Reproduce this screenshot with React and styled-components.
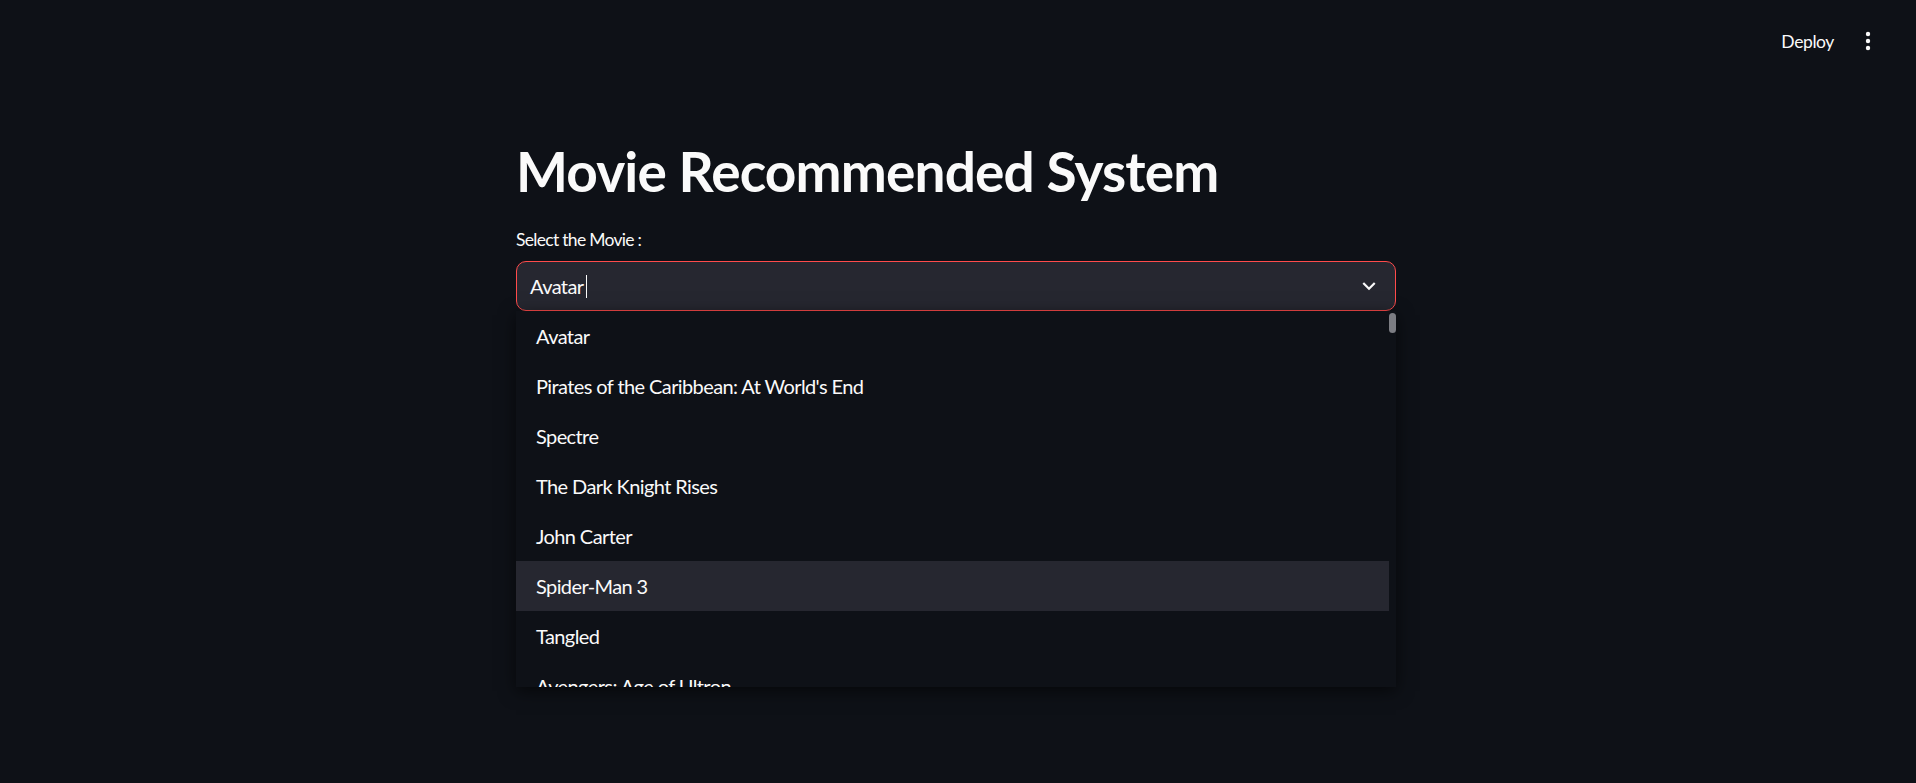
import React from 'react'
import styled, { createGlobalStyle } from 'styled-components'

const GlobalStyle = createGlobalStyle`
  html, body {
    margin: 0;
    padding: 0;
    background: #0e1117;
    color: #fafafa;
    font-family: Lato, "Noto Sans", sans-serif;
  }
  body {
    height: 783px;
    overflow: hidden;
  }
`

const movies = [
  'Avatar',
  "Pirates of the Caribbean: At World's End",
  'Spectre',
  'The Dark Knight Rises',
  'John Carter',
  'Spider-Man 3',
  'Tangled',
  'Avengers: Age of Ultron',
]

export default function App() {
  return (
    <>
      <GlobalStyle />
      <Page>
        <Header>
          <DeployButton>Deploy</DeployButton>
          <MenuButton aria-label="Main menu">
            <svg width="6" height="20" viewBox="0 0 6 20">
              <circle cx="3" cy="3" r="2.2" fill="#fafafa" />
              <circle cx="3" cy="10" r="2.2" fill="#fafafa" />
              <circle cx="3" cy="17" r="2.2" fill="#fafafa" />
            </svg>
          </MenuButton>
        </Header>
        <Main>
          <Title>Movie Recommended System</Title>
          <Label>Select the Movie :</Label>
          <SelectWrap>
            <SelectBox>
              <SelectValue>
                Avatar<Caret />
              </SelectValue>
              <svg width="26" height="26" viewBox="0 0 24 24">
                <path
                  d="M16.59 8.59L12 13.17 7.41 8.59 6 10l6 6 6-6z"
                  fill="#fafafa"
                />
              </svg>
            </SelectBox>
            <Menu>
              <Options>
                {movies.map((m, i) => (
                  <Option key={m} active={i === 5}>
                    {m}
                  </Option>
                ))}
              </Options>
              <Track>
                <Thumb />
              </Track>
            </Menu>
          </SelectWrap>
        </Main>
      </Page>
    </>
  )
}

const Page = styled.div`
  min-height: 783px;
  background: #0e1117;
`

const Header = styled.header`
  display: flex;
  justify-content: flex-end;
  align-items: center;
  height: 82px;
  padding-right: 28px;
  gap: 2px;
`

const DeployButton = styled.button`
  background: transparent;
  border: none;
  color: #fafafa;
  font-family: inherit;
  font-size: 17.5px;
  letter-spacing: -0.4px;
  padding: 6px 12px;
  cursor: pointer;
`

const MenuButton = styled.button`
  display: flex;
  align-items: center;
  justify-content: center;
  width: 40px;
  height: 40px;
  background: transparent;
  border: none;
  padding: 0;
  cursor: pointer;
`

const Main = styled.main`
  width: 880px;
  margin-left: calc(50% - 442px);
  display: flex;
  flex-direction: column;
`

const Title = styled.h1`
  margin: 56px 0 0;
  font-size: 55px;
  line-height: 66px;
  font-weight: 700;
  letter-spacing: -0.85px;
  color: #fafafa;
`

const Label = styled.label`
  margin-top: 22px;
  font-size: 17.5px;
  line-height: 28px;
  letter-spacing: -0.7px;
  color: #fafafa;
`

const SelectWrap = styled.div`
  position: relative;
  margin-top: 7px;
`

const SelectBox = styled.div`
  display: flex;
  align-items: center;
  justify-content: space-between;
  box-sizing: border-box;
  height: 50px;
  padding: 0 13px 0 13px;
  background: #262730;
  border: 1px solid #ff4b4b;
  border-radius: 10px;
`

const SelectValue = styled.span`
  display: flex;
  align-items: center;
  font-size: 20px;
  letter-spacing: -0.6px;
  color: #fafafa;
`

const Caret = styled.span`
  display: inline-block;
  width: 1px;
  height: 23px;
  margin-left: 3px;
  background: #fafafa;
`

const Menu = styled.div`
  position: absolute;
  top: 100%;
  left: 0;
  right: 0;
  height: 376px;
  display: flex;
  background: #0e1117;
  box-shadow: 0 4px 16px rgba(0, 0, 0, 0.6);
  overflow: hidden;
`

const Options = styled.ul`
  flex: 1;
  margin: 0;
  padding: 0;
  list-style: none;
`

const Option = styled.li`
  display: flex;
  align-items: center;
  height: 50px;
  padding-left: 20px;
  font-size: 20px;
  letter-spacing: -0.6px;
  color: #fafafa;
  white-space: nowrap;
  background: ${(props) => (props.active ? '#262730' : 'transparent')};
`

const Track = styled.div`
  width: 7px;
  padding-top: 2px;
`

const Thumb = styled.div`
  width: 7px;
  height: 20px;
  border-radius: 4px;
  background: #7c7d83;
`
